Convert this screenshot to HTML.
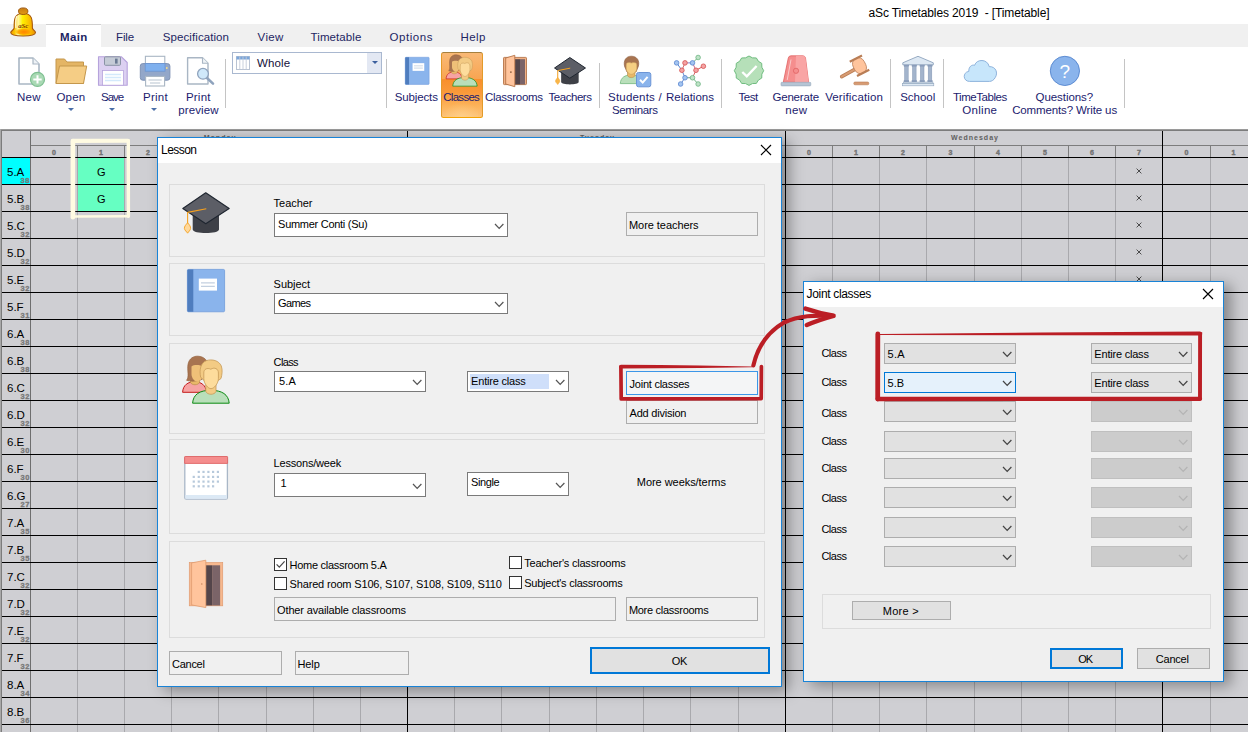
<!DOCTYPE html>
<html><head><meta charset="utf-8"><title>aSc Timetables 2019 - [Timetable]</title>
<style>
html,body{margin:0;padding:0}
body{width:1248px;height:732px;overflow:hidden;position:relative;background:#fff;font-family:"Liberation Sans",sans-serif;}
div{box-sizing:border-box}
.abs{position:absolute}
.sep{position:absolute;width:1px;background:#c4c4c4}
.gb{position:absolute;border:1px solid #dcdcdc}
.cmb{position:absolute;border:1px solid #7a7a7a;background:#fff}
.btn{position:absolute;border:1px solid #adadad;background:#f0f0f0}
.dcmb{position:absolute;border:1px solid #adadad;background:#e1e1e1}
.xcmb{position:absolute;border:1px solid #bfbfbf;background:#cccccc}
.hl{position:absolute;height:1px;background:#000;left:1px}
svg{position:absolute;overflow:visible}

</style></head><body>
<div style="position:absolute;top:6px;font-size:12px;line-height:14px;height:14px;color:#000;white-space:pre;letter-spacing:-0.118px;left:828.94px;width:260px;text-align:center;">aSc Timetables 2019  - [Timetable]</div>
<div style="position:absolute;left:0px;top:24px;width:1248px;height:23px;background:#f0f0f0"></div>
<div style="position:absolute;left:46px;top:24px;width:55px;height:23px;background:#fff;border-top:1px solid #d0d0d0"></div>
<div style="position:absolute;top:31px;font-size:11.5px;line-height:12px;height:12px;color:#1d2563;white-space:pre;letter-spacing:0.401px;font-weight:bold;left:-56.15px;width:260px;text-align:center;">Main</div>
<div style="position:absolute;top:31px;font-size:11.5px;line-height:12px;height:12px;color:#1d2563;white-space:pre;letter-spacing:-0.127px;left:-4.94px;width:260px;text-align:center;">File</div>
<div style="position:absolute;top:31px;font-size:11.5px;line-height:12px;height:12px;color:#1d2563;white-space:pre;letter-spacing:0.075px;left:65.94px;width:260px;text-align:center;">Specification</div>
<div style="position:absolute;top:31px;font-size:11.5px;line-height:12px;height:12px;color:#1d2563;white-space:pre;letter-spacing:0.393px;left:140.70px;width:260px;text-align:center;">View</div>
<div style="position:absolute;top:31px;font-size:11.5px;line-height:12px;height:12px;color:#1d2563;white-space:pre;letter-spacing:0.104px;left:206.05px;width:260px;text-align:center;">Timetable</div>
<div style="position:absolute;top:31px;font-size:11.5px;line-height:12px;height:12px;color:#1d2563;white-space:pre;letter-spacing:0.545px;left:281.27px;width:260px;text-align:center;">Options</div>
<div style="position:absolute;top:31px;font-size:11.5px;line-height:12px;height:12px;color:#1d2563;white-space:pre;letter-spacing:0.416px;left:343.21px;width:260px;text-align:center;">Help</div>
<svg style="left:8px;top:6px" width="32" height="32" viewBox="8 6 32 32">
<defs>
<linearGradient id="bg1" x1="0" x2="1" y1="0" y2="0"><stop offset="0" stop-color="#f09a00"/><stop offset="0.16" stop-color="#fbc400"/><stop offset="0.3" stop-color="#fff7a8"/><stop offset="0.48" stop-color="#fff000"/><stop offset="0.75" stop-color="#fbc000"/><stop offset="1" stop-color="#ee9200"/></linearGradient>
<radialGradient id="bg2" cx="0.55" cy="0.55" r="0.6"><stop offset="0" stop-color="#ff8400"/><stop offset="0.6" stop-color="#ffa800"/><stop offset="1" stop-color="#ffd000" stop-opacity="0.2"/></radialGradient>
<linearGradient id="bg3" x1="0" x2="0" y1="0" y2="1"><stop offset="0" stop-color="#c77c12"/><stop offset="1" stop-color="#e39a14"/></linearGradient>
</defs>
<path d="M14.1 28.2C14.1 21 13.6 13.2 23.2 13.2C32.9 13.2 32.4 21 32.4 28.2C32.7 30 35.4 31 35.5 32.6C35.4 35 29.5 36 23.1 36C16.7 36 10.8 35 10.7 32.6C10.8 31 13.8 30 14.1 28.2Z" fill="url(#bg1)" stroke="#a5560a" stroke-width="1.05"/>
<ellipse cx="23.3" cy="31.6" rx="8.3" ry="3.5" fill="url(#bg2)"/>
<path d="M16.6 16.5C15.6 19 15.6 24 15.8 27.5" fill="none" stroke="#fff" stroke-opacity="0.75" stroke-width="1.3" stroke-linecap="round"/>
<ellipse cx="23.2" cy="11.2" rx="4.7" ry="3.3" fill="url(#bg3)" stroke="#96500a" stroke-width="0.9"/>
<text x="23.3" y="28.4" font-family="Liberation Serif, serif" font-size="6.8" font-weight="bold" font-style="italic" fill="#7e3206" text-anchor="middle">aSc</text>
</svg>
<div class="sep" style="left:225px;top:59px;height:49px"></div>
<div class="sep" style="left:386px;top:59px;height:49px"></div>
<div class="sep" style="left:599px;top:63px;height:45px"></div>
<div class="sep" style="left:721px;top:59px;height:49px"></div>
<div class="sep" style="left:890px;top:59px;height:49px"></div>
<div class="sep" style="left:943px;top:59px;height:49px"></div>
<div class="sep" style="left:1124px;top:59px;height:49px"></div>
<svg style="left:16px;top:54px" width="32" height="36" viewBox="16 54 32 36">
<path d="M19 58H33L39 64V84H19Z" fill="#fff" stroke="#a9b6c4" stroke-width="1.6" stroke-linejoin="round"/>
<path d="M33 58V64H39" fill="#eef2f6" stroke="#a9b6c4" stroke-width="1.2" stroke-linejoin="round"/>
<circle cx="37.5" cy="79.4" r="7" fill="#a9d9b4" stroke="#7dbf90" stroke-width="1.2"/>
<path d="M37.5 75.2V83.6M33.3 79.4H41.7" stroke="#fff" stroke-width="2"/>
</svg>
<div style="position:absolute;top:91px;font-size:11.5px;line-height:12px;height:12px;color:#1b1b6e;white-space:pre;letter-spacing:0.197px;left:-101.15px;width:260px;text-align:center;">New</div>
<svg style="left:54px;top:54px" width="36" height="36" viewBox="54 54 36 36">
<path d="M56 59H64.5L67 62H83.5V83.5H56Z" fill="#e4b565" stroke="#c4974c" stroke-width="1" stroke-linejoin="round"/>
<path d="M59.5 66H86.7L83.5 83.5H56Z" fill="#f5cd85" stroke="#c4974c" stroke-width="1" stroke-linejoin="round"/>
</svg>
<div style="position:absolute;top:91px;font-size:11.5px;line-height:12px;height:12px;color:#1b1b6e;white-space:pre;letter-spacing:0.206px;left:-59.07px;width:260px;text-align:center;">Open</div>
<svg style="left:67.6px;top:108.1px" width="6" height="3" viewBox="0 0 6 3"><path d="M0 0H6L3 3Z" fill="#4a6ea8"/></svg>
<svg style="left:96px;top:54px" width="36" height="36" viewBox="96 54 36 36">
<path d="M98.5 56.8H121.5L127.2 62.5V85.2H98.5Z" fill="#dcd0f1" stroke="#b6a3dc" stroke-width="1.1" stroke-linejoin="round"/>
<rect x="104.5" y="56.8" width="16" height="8.5" rx="1" fill="#c5cbd6" stroke="#8a93a5" stroke-width="1"/>
<rect x="115" y="58.6" width="2.6" height="5" fill="#6b7a93"/>
<rect x="102.5" y="70.5" width="21" height="14.7" fill="#fff" stroke="#b6a3dc" stroke-width="0.8"/>
<path d="M105 74.5H121M105 77.5H121M105 80.5H121" stroke="#d3e9fb" stroke-width="1.3"/>
</svg>
<div style="position:absolute;top:91px;font-size:11.5px;line-height:12px;height:12px;color:#1b1b6e;white-space:pre;letter-spacing:-1.021px;left:-17.89px;width:260px;text-align:center;">Save</div>
<svg style="left:109.4px;top:108.1px" width="6" height="3" viewBox="0 0 6 3"><path d="M0 0H6L3 3Z" fill="#4a6ea8"/></svg>
<svg style="left:138px;top:54px" width="36" height="36" viewBox="138 54 36 36">
<rect x="145.4" y="56.3" width="19.4" height="9" fill="#fff" stroke="#a9b6c4" stroke-width="1.1"/>
<rect x="140.3" y="63.6" width="29.6" height="16.6" rx="2.5" fill="#93a7c9" stroke="#7f93b5" stroke-width="1"/>
<rect x="145.2" y="63.6" width="19.8" height="7.6" fill="#7fb0ee" stroke="#6b95d1" stroke-width="0.8"/>
<circle cx="166.8" cy="68" r="0.9" fill="#f7e08a"/>
<rect x="145.6" y="76.4" width="19" height="9.6" fill="#fff" stroke="#a9b6c4" stroke-width="1.1"/>
<path d="M148.5 80H161.7M150 83H160.2" stroke="#b8c3cf" stroke-width="1.1"/>
</svg>
<div style="position:absolute;top:91px;font-size:11.5px;line-height:12px;height:12px;color:#1b1b6e;white-space:pre;letter-spacing:0.238px;left:25.47px;width:260px;text-align:center;">Print</div>
<svg style="left:151.4px;top:108.2px" width="6" height="3" viewBox="0 0 6 3"><path d="M0 0H6L3 3Z" fill="#4a6ea8"/></svg>
<svg style="left:184px;top:54px" width="36" height="36" viewBox="184 54 36 36">
<path d="M187.6 57.8H202.5L208 63.3V84H187.6Z" fill="#fff" stroke="#a9b6c4" stroke-width="1.4" stroke-linejoin="round"/>
<path d="M202.5 57.8V63.3H208" fill="#eef2f6" stroke="#a9b6c4" stroke-width="1.1" stroke-linejoin="round"/>
<path d="M207 78L213 83.6" stroke="#8fa3bd" stroke-width="2.6" stroke-linecap="round"/>
<circle cx="203" cy="73.8" r="5.4" fill="#cfe8fa" stroke="#8fa3bd" stroke-width="1.3"/>
</svg>
<div style="position:absolute;top:91px;font-size:11.5px;line-height:12px;height:12px;color:#1b1b6e;white-space:pre;letter-spacing:0.213px;left:68.31px;width:260px;text-align:center;">Print</div>
<div style="position:absolute;top:104px;font-size:11.5px;line-height:12px;height:12px;color:#1b1b6e;white-space:pre;letter-spacing:0.129px;left:68.51px;width:260px;text-align:center;">preview</div>
<div style="position:absolute;left:232px;top:52px;width:150px;height:22px;border:1px solid #a9b8d0;background:#fff"></div>
<div style="position:absolute;left:367px;top:53px;width:14px;height:20px;background:#e3e8f3"></div>
<svg style="left:372px;top:61px" width="6" height="3" viewBox="0 0 6 3"><path d="M0 0H6L3 3Z" fill="#3b5f9e"/></svg>
<svg style="left:236px;top:56px" width="14" height="14" viewBox="0 0 14 14">
<rect x="0.5" y="0.5" width="13" height="13" fill="#fff" stroke="#b9c3d3" stroke-width="1"/>
<rect x="0.5" y="0.5" width="13" height="3" fill="#7ba6da"/>
<path d="M3.8 0.5V13.5M7 0.5V13.5M10.2 0.5V13.5" stroke="#c3cbd8" stroke-width="0.9"/>
</svg>
<div style="position:absolute;top:57px;font-size:11.5px;line-height:12px;height:12px;color:#14103a;white-space:pre;letter-spacing:0.15px;left:257px;">Whole</div>
<svg style="left:405px;top:57px" width="24.40" height="27.73" viewBox="0 0 38 43.2">
<rect x="0.4" y="0.4" width="37.2" height="42.4" rx="1.2" fill="#8ab4ec" stroke="#6f9bdb" stroke-width="0.8"/>
<path d="M1.4 0.4H6.3V42.8H1.4Q0.4 42.8 0.4 41.8V1.4Q0.4 0.4 1.4 0.4Z" fill="#4f7dbe"/>
<rect x="11.8" y="9.6" width="18.2" height="12" fill="#fff"/>
<path d="M14 13.8H27.8M14 17.3H27.8" stroke="#c3d0e0" stroke-width="1.3"/>
</svg>
<div style="position:absolute;top:91px;font-size:11.5px;line-height:12px;height:12px;color:#1b1b6e;white-space:pre;letter-spacing:-0.137px;left:286.31px;width:260px;text-align:center;">Subjects</div>
<div style="position:absolute;left:441px;top:52px;width:42px;height:66px;border:1px solid;border-color:#a6803e #e39a2a #f5a400 #e39a2a;border-radius:2.5px;background:linear-gradient(180deg,#f9b976 0%,#f8a552 40%,#f8902c 41.5%,#fa9a3a 62%,#fcb45c 84%,#fdc47a 100%)"></div>
<div style="position:absolute;left:446px;top:96px;width:32px;height:21px;background:radial-gradient(ellipse 60% 70% at 50% 100%,rgba(255,214,150,.6),rgba(255,214,150,0))"></div>
<svg style="left:445.2px;top:54.4px" width="33.35" height="33.35" viewBox="181 355 50 50">
<path d="M182.6 392.3C183 385 188 381.8 194.5 381.8C201 381.8 206 385 206.4 392.3Z" fill="#f6a3a3" stroke="#c41a1a" stroke-width="1"/>
<path d="M190.5 376H199.5V382.5C198 385.5 192 385.5 190.5 382.5Z" fill="#e8b868" stroke="#b98c4a" stroke-width="0.7"/>
<path d="M186.6 380.3C189.5 377 187 370 188 364.5C189 358 194 356 198 356.2C203.5 356.5 208.5 360 208 367C207.6 372 205 378 201 379.8C196 381.5 190 381.5 186.6 380.3Z" fill="#a87450" stroke="#93603c" stroke-width="0.7"/>
<path d="M191.5 366.5C194 364.5 200 364.5 203.5 367V374C203 379 199 381.5 197 381.5C194.5 381.5 191.5 378 191.5 374Z" fill="#efc078"/>
<path d="M192.6 403.2C193.2 394.5 199.5 390.3 210.8 390.3C222 390.3 228.5 394.5 229.2 403.2Z" fill="#b9dfba" stroke="#0c8a12" stroke-width="1"/>
<path d="M205.8 385H216V391.5C214.5 395.2 207.5 395.2 205.8 391.5Z" fill="#f3cb84" stroke="#c69a58" stroke-width="0.8"/>
<path d="M200.6 377C199.2 370 200.5 362.8 206.5 360.6C212 358.8 219 360.5 221.3 366C222.8 370 222 375 221 378.5L217.5 381H204.5Z" fill="#f3cb84" stroke="#c69a58" stroke-width="0.8"/>
<path d="M203.8 373C203.8 369 207 367.6 210.8 369.2C214.5 367 218.4 368.5 218.4 373V378.5C218.4 383.5 214 388.7 211 388.7C208 388.7 203.8 383.5 203.8 378.5Z" fill="#fddc9c" stroke="#c69a58" stroke-width="0.8"/>
</svg>
<div style="position:absolute;top:91px;font-size:11.5px;line-height:12px;height:12px;color:#1b1b6e;white-space:pre;letter-spacing:-0.725px;left:331.21px;width:260px;text-align:center;">Classes</div>
<svg style="left:500px;top:52px" width="30" height="38" viewBox="500 52 30 38">
<rect x="503.5" y="57.4" width="23" height="27.2" rx="0.8" fill="#f0b186" stroke="#b5754a" stroke-width="0.9"/>
<rect x="515" y="59.2" width="5" height="25.2" fill="#54454a"/>
<rect x="520" y="59.2" width="5" height="25.2" fill="#7b6468"/>
<path d="M505.7 58L514.8 55.3V86.7L505.7 84Z" fill="#ffc49c" stroke="#b5754a" stroke-width="0.9" stroke-linejoin="round"/>
<circle cx="510.9" cy="72.1" r="0.85" fill="#8a5a3a"/>
</svg>
<div style="position:absolute;top:91px;font-size:11.5px;line-height:12px;height:12px;color:#1b1b6e;white-space:pre;letter-spacing:-0.29px;left:383.86px;width:260px;text-align:center;">Classrooms</div>
<svg style="left:554.0px;top:57.0px" width="32.02" height="28.01" viewBox="182 192 48 42">
<path d="M192.7 214V229.5C192.7 234.3 219 234.3 219 229.5V214Z" fill="#3e4047"/>
<path d="M205.75 192.8L229.2 208.5L205.75 223.8L182.8 208.5Z" fill="#5c5e66" stroke="#1f2630" stroke-width="1.5" stroke-linejoin="round"/>
<path d="M206.3 208.7L187.6 212.4V224" fill="none" stroke="#f4a020" stroke-width="1.5" stroke-linejoin="round"/>
<path d="M187.6 222.8C189.4 224.8 190.8 226.5 190.6 228.5C190.4 230.3 188.6 231.6 187.6 233.2C186.6 231.6 184.6 230.3 184.4 228.5C184.2 226.5 185.8 224.8 187.6 222.8Z" fill="#f9b648" stroke="#f4a020" stroke-width="0.9"/>
</svg>
<div style="position:absolute;top:91px;font-size:11.5px;line-height:12px;height:12px;color:#1b1b6e;white-space:pre;letter-spacing:-0.466px;left:440.02px;width:260px;text-align:center;">Teachers</div>
<svg style="left:618px;top:54px" width="36" height="36" viewBox="618 54 36 36">
<path d="M620.3 83.6C620.6 77.5 625 75 631 75C637 75 641.5 77.5 641.8 83.6Z" fill="#b9dfba" stroke="#7cbc86" stroke-width="0.9"/>
<path d="M627.5 70H635V75.5C633.8 78.3 628.7 78.3 627.5 75.5Z" fill="#e8b868" stroke="#b98c4a" stroke-width="0.6"/>
<path d="M624.6 66.5C623.2 60.5 626 56.2 631.4 56.2C636.8 56.2 640 60.5 638.3 66.5L636 72H627Z" fill="#a87450" stroke="#8c5b3a" stroke-width="0.6"/>
<path d="M626.2 65C626.2 62.5 628.5 62 631.4 63C634.3 62 636.8 62.5 636.8 65V68.3C636.8 71.8 633.6 74.3 631.4 74.3C629.2 74.3 626.2 71.8 626.2 68.3Z" fill="#f6cf82" stroke="#c69a58" stroke-width="0.5"/>
<rect x="636.5" y="72.5" width="14.3" height="14.3" rx="2" fill="#8ab4ec" stroke="#6b95d6" stroke-width="1"/>
<path d="M640 79.8L642.7 82.6L647.6 76.8" fill="none" stroke="#fff" stroke-width="2"/>
</svg>
<div style="position:absolute;top:91px;font-size:11.5px;line-height:12px;height:12px;color:#1b1b6e;white-space:pre;letter-spacing:0.207px;left:504.98px;width:260px;text-align:center;">Students /</div>
<div style="position:absolute;top:104px;font-size:11.5px;line-height:12px;height:12px;color:#1b1b6e;white-space:pre;letter-spacing:-0.382px;left:504.81px;width:260px;text-align:center;">Seminars</div>
<svg style="left:672px;top:52px" width="40" height="40" viewBox="672 52 40 40"><path d="M685.00 62.88L692.50 62.88" stroke="#8a86c8" stroke-width="1"/><path d="M692.50 62.88L696.00 70.25" stroke="#c86a8a" stroke-width="1"/><path d="M696.00 70.25L692.50 77.75" stroke="#d06a6a" stroke-width="1"/><path d="M692.50 77.75L685.00 77.75" stroke="#6aa08a" stroke-width="1"/><path d="M685.00 77.75L681.88 70.25" stroke="#6a8ad0" stroke-width="1"/><path d="M681.88 70.25L685.00 62.88" stroke="#d06a6a" stroke-width="1"/><path d="M676.62 62.88L681.88 70.25" stroke="#5a86d0" stroke-width="1"/><path d="M698.12 57.50L692.50 62.88" stroke="#6cb482" stroke-width="1"/><path d="M703.38 66.25L696.00 70.25" stroke="#d65050" stroke-width="1"/><path d="M698.12 84.00L692.50 77.75" stroke="#6cb482" stroke-width="1"/><path d="M680.62 84.00L685.00 77.75" stroke="#5a86d0" stroke-width="1"/><circle cx="685.00" cy="62.88" r="2.3" fill="#f4a3a3" stroke="#d65050" stroke-width="0.8"/><circle cx="692.50" cy="62.88" r="2.3" fill="#a3c4f0" stroke="#5a86d0" stroke-width="0.8"/><circle cx="696.00" cy="70.25" r="2.3" fill="#f4a3a3" stroke="#d65050" stroke-width="0.8"/><circle cx="692.50" cy="77.75" r="2.3" fill="#bfe3c7" stroke="#6cb482" stroke-width="0.8"/><circle cx="685.00" cy="77.75" r="2.3" fill="#a3c4f0" stroke="#5a86d0" stroke-width="0.8"/><circle cx="681.88" cy="70.25" r="2.3" fill="#f4a3a3" stroke="#d65050" stroke-width="0.8"/><circle cx="676.62" cy="62.88" r="2.3" fill="#a3c4f0" stroke="#5a86d0" stroke-width="0.8"/><circle cx="698.12" cy="57.50" r="2.3" fill="#bfe3c7" stroke="#6cb482" stroke-width="0.8"/><circle cx="703.38" cy="66.25" r="2.3" fill="#f4a3a3" stroke="#d65050" stroke-width="0.8"/><circle cx="698.12" cy="84.00" r="2.3" fill="#bfe3c7" stroke="#6cb482" stroke-width="0.8"/><circle cx="680.62" cy="84.00" r="2.3" fill="#a3c4f0" stroke="#5a86d0" stroke-width="0.8"/></svg>
<div style="position:absolute;top:91px;font-size:11.5px;line-height:12px;height:12px;color:#1b1b6e;white-space:pre;letter-spacing:-0.006px;left:560.00px;width:260px;text-align:center;">Relations</div>
<svg style="left:732px;top:54px" width="36" height="36" viewBox="732 54 36 36">
<path d="M749.00 56.00L752.44 57.85L756.35 57.97L758.40 61.30L761.73 63.35L761.85 67.26L763.70 70.70L761.85 74.14L761.73 78.05L758.40 80.10L756.35 83.43L752.44 83.55L749.00 85.40L745.56 83.55L741.65 83.43L739.60 80.10L736.27 78.05L736.15 74.14L734.30 70.70L736.15 67.26L736.27 63.35L739.60 61.30L741.65 57.97L745.56 57.85Z" fill="#b6e0b9" stroke="#70bd80" stroke-width="1" stroke-linejoin="round"/>
<path d="M742.3 72L746.8 76.3L756.6 66" fill="none" stroke="#fff" stroke-width="2.4"/>
</svg>
<div style="position:absolute;top:91px;font-size:11.5px;line-height:12px;height:12px;color:#1b1b6e;white-space:pre;letter-spacing:-0.48px;left:618.13px;width:260px;text-align:center;">Test</div>
<svg style="left:778px;top:52px" width="36" height="38" viewBox="778 52 36 38">
<path d="M783.3 82.3L788.3 58Q788.8 55.8 791 55.8H802.8Q805 55.8 805.5 58L808.6 82.3Z" fill="#f58e8e" stroke="#e06262" stroke-width="0.8"/>
<path d="M796 55.8H802.8Q805 55.8 805.5 58L808.6 82.3H795Z" fill="#f9a5a5"/>
<path d="M787.2 80L791 59.5" stroke="#fbd0d0" stroke-width="0.9"/>
<circle cx="796" cy="70.8" r="2.6" fill="#f58e8e" stroke="#e06262" stroke-width="0.8"/>
<rect x="781" y="82.3" width="29.8" height="3.6" rx="0.8" fill="#b5c4d4" stroke="#97a9bd" stroke-width="0.6"/>
</svg>
<div style="position:absolute;top:91px;font-size:11.5px;line-height:12px;height:12px;color:#1b1b6e;white-space:pre;letter-spacing:-0.193px;left:665.65px;width:260px;text-align:center;">Generate</div>
<div style="position:absolute;top:104px;font-size:11.5px;line-height:12px;height:12px;color:#1b1b6e;white-space:pre;letter-spacing:0.451px;left:666.38px;width:260px;text-align:center;">new</div>
<svg style="left:838px;top:52px" width="36" height="38" viewBox="838 52 36 38">
<path d="M855.3 69.2L841.7 76.6" stroke="#b97d55" stroke-width="3.6" stroke-linecap="round"/>
<path d="M855.3 69.2L841.7 76.6" stroke="#d79b72" stroke-width="2" stroke-linecap="round"/>
<g transform="rotate(-27 859.5 65.7)">
<rect x="853.4" y="57.6" width="12.2" height="16.2" rx="5.4" ry="6.5" fill="#ffc49c" stroke="#c08560" stroke-width="0.8"/>
<rect x="852.6" y="56.6" width="13.8" height="2.2" fill="#b97d55"/>
<rect x="852.6" y="72.6" width="13.8" height="2.2" fill="#b97d55"/>
</g>
<rect x="853.8" y="82" width="15" height="2.8" rx="1.2" fill="#d79b72" stroke="#b97d55" stroke-width="0.6"/>
</svg>
<div style="position:absolute;top:91px;font-size:11.5px;line-height:12px;height:12px;color:#1b1b6e;white-space:pre;letter-spacing:0.14px;left:724.12px;width:260px;text-align:center;">Verification</div>
<svg style="left:900px;top:54px" width="36" height="34" viewBox="900 54 36 34">
<path d="M918 56.3L933.3 62.8V64.8H902.8V62.8Z" fill="#dde8f3" stroke="#8fa4bd" stroke-width="0.9" stroke-linejoin="round"/>
<g fill="#a3b4cc" stroke="#8497b4" stroke-width="0.5">
<rect x="904.6" y="66.2" width="3.6" height="14.6"/><rect x="912.5" y="66.2" width="3.6" height="14.6"/><rect x="920.4" y="66.2" width="3.6" height="14.6"/><rect x="928.2" y="66.2" width="3.6" height="14.6"/>
</g>
<g fill="#8a9dbb"><rect x="903.8" y="64.8" width="5.2" height="1.6"/><rect x="911.7" y="64.8" width="5.2" height="1.6"/><rect x="919.6" y="64.8" width="5.2" height="1.6"/><rect x="927.4" y="64.8" width="5.2" height="1.6"/>
<rect x="903.8" y="80.2" width="5.2" height="1.8"/><rect x="911.7" y="80.2" width="5.2" height="1.8"/><rect x="919.6" y="80.2" width="5.2" height="1.8"/><rect x="927.4" y="80.2" width="5.2" height="1.8"/></g>
<rect x="903.4" y="82" width="29.6" height="1.6" fill="#cbd7e5" stroke="#8fa4bd" stroke-width="0.5"/>
<rect x="902.4" y="83.6" width="31.4" height="2.2" fill="#dde8f3" stroke="#8fa4bd" stroke-width="0.6"/>
</svg>
<div style="position:absolute;top:91px;font-size:11.5px;line-height:12px;height:12px;color:#1b1b6e;white-space:pre;letter-spacing:-0.023px;left:787.66px;width:260px;text-align:center;">School</div>
<svg style="left:960px;top:56px" width="40" height="30" viewBox="960 56 40 30">
<path d="M969.5 81.4C962.8 81.4 962.4 72.2 968.8 71.4C968.6 66.5 972 64.4 974.6 65.3C976.4 58.8 987.6 58.6 989.2 66.6C996 66.4 998.2 73 995.2 77.6C993.8 80.2 991.5 81.4 989.5 81.4Z" fill="#c7e6fb" stroke="#8fb3dc" stroke-width="1"/>
</svg>
<div style="position:absolute;top:91px;font-size:11.5px;line-height:12px;height:12px;color:#1b1b6e;white-space:pre;letter-spacing:-0.458px;left:849.85px;width:260px;text-align:center;">TimeTables</div>
<div style="position:absolute;top:104px;font-size:11.5px;line-height:12px;height:12px;color:#1b1b6e;white-space:pre;letter-spacing:0.271px;left:849.79px;width:260px;text-align:center;">Online</div>
<svg style="left:1048px;top:54px" width="34" height="34" viewBox="1048 54 34 34">
<circle cx="1064.9" cy="70.9" r="14.6" fill="#8ab4ec" stroke="#5d8cd2" stroke-width="1"/>
<text x="1064.9" y="77.6" font-family="Liberation Sans, sans-serif" font-size="19" fill="#fff" text-anchor="middle">?</text>
</svg>
<div style="position:absolute;top:91px;font-size:11.5px;line-height:12px;height:12px;color:#1b1b6e;white-space:pre;letter-spacing:-0.064px;left:934.32px;width:260px;text-align:center;">Questions?</div>
<div style="position:absolute;top:104px;font-size:11.5px;line-height:12px;height:12px;color:#1b1b6e;white-space:pre;letter-spacing:-0.127px;left:934.59px;width:260px;text-align:center;">Comments? Write us</div>
<div style="position:absolute;left:0px;top:129px;width:1248px;height:603px;background:#cfcfd3"></div>
<div style="position:absolute;left:0px;top:129px;width:1248px;height:1px;background:#9a9a9a"></div>
<div style="position:absolute;left:0px;top:130px;width:1248px;height:1px;background:#7c7c7c"></div>
<div style="position:absolute;left:0px;top:129px;width:1px;height:603px;background:#a8a8a8"></div>
<div style="position:absolute;left:1px;top:130px;width:1px;height:602px;background:#7c7c7c"></div>
<div style="position:absolute;left:30px;top:131px;width:1px;height:601px;background:#6e6e6e"></div>
<div style="position:absolute;left:31px;top:145px;width:1217px;height:1px;background:#7d7d7d"></div>
<div style="position:absolute;left:77px;top:146px;width:1px;height:11px;background:#7d7d7d"></div>
<div style="position:absolute;left:77px;top:158px;width:1px;height:574px;background:#a9a9ad"></div>
<div style="position:absolute;left:124px;top:146px;width:1px;height:11px;background:#7d7d7d"></div>
<div style="position:absolute;left:124px;top:158px;width:1px;height:574px;background:#a9a9ad"></div>
<div style="position:absolute;left:171px;top:146px;width:1px;height:11px;background:#7d7d7d"></div>
<div style="position:absolute;left:171px;top:158px;width:1px;height:574px;background:#a9a9ad"></div>
<div style="position:absolute;left:218px;top:146px;width:1px;height:11px;background:#7d7d7d"></div>
<div style="position:absolute;left:218px;top:158px;width:1px;height:574px;background:#a9a9ad"></div>
<div style="position:absolute;left:266px;top:146px;width:1px;height:11px;background:#7d7d7d"></div>
<div style="position:absolute;left:266px;top:158px;width:1px;height:574px;background:#a9a9ad"></div>
<div style="position:absolute;left:313px;top:146px;width:1px;height:11px;background:#7d7d7d"></div>
<div style="position:absolute;left:313px;top:158px;width:1px;height:574px;background:#a9a9ad"></div>
<div style="position:absolute;left:360px;top:146px;width:1px;height:11px;background:#7d7d7d"></div>
<div style="position:absolute;left:360px;top:158px;width:1px;height:574px;background:#a9a9ad"></div>
<div style="position:absolute;left:407px;top:131px;width:1px;height:601px;background:#000"></div>
<div style="position:absolute;top:149px;font-size:7px;line-height:7px;height:7px;color:#737373;white-space:pre;font-weight:bold;left:44.00px;width:20px;text-align:center;-webkit-text-stroke:0.4px #737373;">0</div>
<div style="position:absolute;top:149px;font-size:7px;line-height:7px;height:7px;color:#737373;white-space:pre;font-weight:bold;left:91.00px;width:20px;text-align:center;-webkit-text-stroke:0.4px #737373;">1</div>
<div style="position:absolute;top:149px;font-size:7px;line-height:7px;height:7px;color:#737373;white-space:pre;font-weight:bold;left:138.00px;width:20px;text-align:center;-webkit-text-stroke:0.4px #737373;">2</div>
<div style="position:absolute;top:149px;font-size:7px;line-height:7px;height:7px;color:#737373;white-space:pre;font-weight:bold;left:185.00px;width:20px;text-align:center;-webkit-text-stroke:0.4px #737373;">3</div>
<div style="position:absolute;top:149px;font-size:7px;line-height:7px;height:7px;color:#737373;white-space:pre;font-weight:bold;left:232.50px;width:20px;text-align:center;-webkit-text-stroke:0.4px #737373;">4</div>
<div style="position:absolute;top:149px;font-size:7px;line-height:7px;height:7px;color:#737373;white-space:pre;font-weight:bold;left:280.00px;width:20px;text-align:center;-webkit-text-stroke:0.4px #737373;">5</div>
<div style="position:absolute;top:149px;font-size:7px;line-height:7px;height:7px;color:#737373;white-space:pre;font-weight:bold;left:327.00px;width:20px;text-align:center;-webkit-text-stroke:0.4px #737373;">6</div>
<div style="position:absolute;top:149px;font-size:7px;line-height:7px;height:7px;color:#737373;white-space:pre;font-weight:bold;left:374.00px;width:20px;text-align:center;-webkit-text-stroke:0.4px #737373;">7</div>
<div style="position:absolute;top:134px;font-size:7px;line-height:7px;height:7px;color:#606060;white-space:pre;letter-spacing:1.028px;font-weight:bold;left:160.01px;width:120px;text-align:center;">Monday</div>
<div style="position:absolute;left:454px;top:146px;width:1px;height:11px;background:#7d7d7d"></div>
<div style="position:absolute;left:454px;top:158px;width:1px;height:574px;background:#a9a9ad"></div>
<div style="position:absolute;left:501px;top:146px;width:1px;height:11px;background:#7d7d7d"></div>
<div style="position:absolute;left:501px;top:158px;width:1px;height:574px;background:#a9a9ad"></div>
<div style="position:absolute;left:549px;top:146px;width:1px;height:11px;background:#7d7d7d"></div>
<div style="position:absolute;left:549px;top:158px;width:1px;height:574px;background:#a9a9ad"></div>
<div style="position:absolute;left:596px;top:146px;width:1px;height:11px;background:#7d7d7d"></div>
<div style="position:absolute;left:596px;top:158px;width:1px;height:574px;background:#a9a9ad"></div>
<div style="position:absolute;left:643px;top:146px;width:1px;height:11px;background:#7d7d7d"></div>
<div style="position:absolute;left:643px;top:158px;width:1px;height:574px;background:#a9a9ad"></div>
<div style="position:absolute;left:690px;top:146px;width:1px;height:11px;background:#7d7d7d"></div>
<div style="position:absolute;left:690px;top:158px;width:1px;height:574px;background:#a9a9ad"></div>
<div style="position:absolute;left:738px;top:146px;width:1px;height:11px;background:#7d7d7d"></div>
<div style="position:absolute;left:738px;top:158px;width:1px;height:574px;background:#a9a9ad"></div>
<div style="position:absolute;left:785px;top:131px;width:1px;height:601px;background:#000"></div>
<div style="position:absolute;top:149px;font-size:7px;line-height:7px;height:7px;color:#737373;white-space:pre;font-weight:bold;left:421.00px;width:20px;text-align:center;-webkit-text-stroke:0.4px #737373;">0</div>
<div style="position:absolute;top:149px;font-size:7px;line-height:7px;height:7px;color:#737373;white-space:pre;font-weight:bold;left:468.00px;width:20px;text-align:center;-webkit-text-stroke:0.4px #737373;">1</div>
<div style="position:absolute;top:149px;font-size:7px;line-height:7px;height:7px;color:#737373;white-space:pre;font-weight:bold;left:515.50px;width:20px;text-align:center;-webkit-text-stroke:0.4px #737373;">2</div>
<div style="position:absolute;top:149px;font-size:7px;line-height:7px;height:7px;color:#737373;white-space:pre;font-weight:bold;left:563.00px;width:20px;text-align:center;-webkit-text-stroke:0.4px #737373;">3</div>
<div style="position:absolute;top:149px;font-size:7px;line-height:7px;height:7px;color:#737373;white-space:pre;font-weight:bold;left:610.00px;width:20px;text-align:center;-webkit-text-stroke:0.4px #737373;">4</div>
<div style="position:absolute;top:149px;font-size:7px;line-height:7px;height:7px;color:#737373;white-space:pre;font-weight:bold;left:657.00px;width:20px;text-align:center;-webkit-text-stroke:0.4px #737373;">5</div>
<div style="position:absolute;top:149px;font-size:7px;line-height:7px;height:7px;color:#737373;white-space:pre;font-weight:bold;left:704.50px;width:20px;text-align:center;-webkit-text-stroke:0.4px #737373;">6</div>
<div style="position:absolute;top:149px;font-size:7px;line-height:7px;height:7px;color:#737373;white-space:pre;font-weight:bold;left:752.00px;width:20px;text-align:center;-webkit-text-stroke:0.4px #737373;">7</div>
<div style="position:absolute;top:134px;font-size:7px;line-height:7px;height:7px;color:#606060;white-space:pre;letter-spacing:1.028px;font-weight:bold;left:537.51px;width:120px;text-align:center;">Tuesday</div>
<div style="position:absolute;left:832px;top:146px;width:1px;height:11px;background:#7d7d7d"></div>
<div style="position:absolute;left:832px;top:158px;width:1px;height:574px;background:#a9a9ad"></div>
<div style="position:absolute;left:879px;top:146px;width:1px;height:11px;background:#7d7d7d"></div>
<div style="position:absolute;left:879px;top:158px;width:1px;height:574px;background:#a9a9ad"></div>
<div style="position:absolute;left:926px;top:146px;width:1px;height:11px;background:#7d7d7d"></div>
<div style="position:absolute;left:926px;top:158px;width:1px;height:574px;background:#a9a9ad"></div>
<div style="position:absolute;left:974px;top:146px;width:1px;height:11px;background:#7d7d7d"></div>
<div style="position:absolute;left:974px;top:158px;width:1px;height:574px;background:#a9a9ad"></div>
<div style="position:absolute;left:1021px;top:146px;width:1px;height:11px;background:#7d7d7d"></div>
<div style="position:absolute;left:1021px;top:158px;width:1px;height:574px;background:#a9a9ad"></div>
<div style="position:absolute;left:1068px;top:146px;width:1px;height:11px;background:#7d7d7d"></div>
<div style="position:absolute;left:1068px;top:158px;width:1px;height:574px;background:#a9a9ad"></div>
<div style="position:absolute;left:1115px;top:146px;width:1px;height:11px;background:#7d7d7d"></div>
<div style="position:absolute;left:1115px;top:158px;width:1px;height:574px;background:#a9a9ad"></div>
<div style="position:absolute;left:1162px;top:131px;width:1px;height:601px;background:#000"></div>
<div style="position:absolute;top:149px;font-size:7px;line-height:7px;height:7px;color:#737373;white-space:pre;font-weight:bold;left:799.00px;width:20px;text-align:center;-webkit-text-stroke:0.4px #737373;">0</div>
<div style="position:absolute;top:149px;font-size:7px;line-height:7px;height:7px;color:#737373;white-space:pre;font-weight:bold;left:846.00px;width:20px;text-align:center;-webkit-text-stroke:0.4px #737373;">1</div>
<div style="position:absolute;top:149px;font-size:7px;line-height:7px;height:7px;color:#737373;white-space:pre;font-weight:bold;left:893.00px;width:20px;text-align:center;-webkit-text-stroke:0.4px #737373;">2</div>
<div style="position:absolute;top:149px;font-size:7px;line-height:7px;height:7px;color:#737373;white-space:pre;font-weight:bold;left:940.50px;width:20px;text-align:center;-webkit-text-stroke:0.4px #737373;">3</div>
<div style="position:absolute;top:149px;font-size:7px;line-height:7px;height:7px;color:#737373;white-space:pre;font-weight:bold;left:988.00px;width:20px;text-align:center;-webkit-text-stroke:0.4px #737373;">4</div>
<div style="position:absolute;top:149px;font-size:7px;line-height:7px;height:7px;color:#737373;white-space:pre;font-weight:bold;left:1035.00px;width:20px;text-align:center;-webkit-text-stroke:0.4px #737373;">5</div>
<div style="position:absolute;top:149px;font-size:7px;line-height:7px;height:7px;color:#737373;white-space:pre;font-weight:bold;left:1082.00px;width:20px;text-align:center;-webkit-text-stroke:0.4px #737373;">6</div>
<div style="position:absolute;top:149px;font-size:7px;line-height:7px;height:7px;color:#737373;white-space:pre;font-weight:bold;left:1129.00px;width:20px;text-align:center;-webkit-text-stroke:0.4px #737373;">7</div>
<div style="position:absolute;top:134px;font-size:7px;line-height:7px;height:7px;color:#606060;white-space:pre;letter-spacing:1.028px;font-weight:bold;left:915.01px;width:120px;text-align:center;">Wednesday</div>
<div style="position:absolute;left:1210px;top:146px;width:1px;height:11px;background:#7d7d7d"></div>
<div style="position:absolute;left:1210px;top:158px;width:1px;height:574px;background:#a9a9ad"></div>
<div style="position:absolute;top:149px;font-size:7px;line-height:7px;height:7px;color:#737373;white-space:pre;font-weight:bold;left:1176.50px;width:20px;text-align:center;-webkit-text-stroke:0.4px #737373;">0</div>
<div style="position:absolute;top:149px;font-size:7px;line-height:7px;height:7px;color:#737373;white-space:pre;font-weight:bold;left:1223.50px;width:20px;text-align:center;-webkit-text-stroke:0.4px #737373;">1</div>
<div style="position:absolute;left:2px;top:157px;width:1246px;height:1px;background:#000"></div>
<div style="position:absolute;left:2px;top:184px;width:1246px;height:1px;background:#000"></div>
<div style="position:absolute;left:2px;top:211px;width:1246px;height:1px;background:#000"></div>
<div style="position:absolute;left:2px;top:238px;width:1246px;height:1px;background:#000"></div>
<div style="position:absolute;left:2px;top:265px;width:1246px;height:1px;background:#000"></div>
<div style="position:absolute;left:2px;top:292px;width:1246px;height:1px;background:#000"></div>
<div style="position:absolute;left:2px;top:319px;width:1246px;height:1px;background:#000"></div>
<div style="position:absolute;left:2px;top:346px;width:1246px;height:1px;background:#000"></div>
<div style="position:absolute;left:2px;top:373px;width:1246px;height:1px;background:#000"></div>
<div style="position:absolute;left:2px;top:400px;width:1246px;height:1px;background:#000"></div>
<div style="position:absolute;left:2px;top:427px;width:1246px;height:1px;background:#000"></div>
<div style="position:absolute;left:2px;top:454px;width:1246px;height:1px;background:#000"></div>
<div style="position:absolute;left:2px;top:481px;width:1246px;height:1px;background:#000"></div>
<div style="position:absolute;left:2px;top:508px;width:1246px;height:1px;background:#000"></div>
<div style="position:absolute;left:2px;top:535px;width:1246px;height:1px;background:#000"></div>
<div style="position:absolute;left:2px;top:562px;width:1246px;height:1px;background:#000"></div>
<div style="position:absolute;left:2px;top:589px;width:1246px;height:1px;background:#000"></div>
<div style="position:absolute;left:2px;top:616px;width:1246px;height:1px;background:#000"></div>
<div style="position:absolute;left:2px;top:643px;width:1246px;height:1px;background:#000"></div>
<div style="position:absolute;left:2px;top:670px;width:1246px;height:1px;background:#000"></div>
<div style="position:absolute;left:2px;top:697px;width:1246px;height:1px;background:#000"></div>
<div style="position:absolute;left:2px;top:724px;width:1246px;height:1px;background:#000"></div>
<div style="position:absolute;left:2px;top:158px;width:28px;height:26px;background:#00ffff"></div>
<div style="position:absolute;top:166px;font-size:11.5px;line-height:12px;height:12px;color:#000;white-space:pre;left:7px;">5.A</div>
<div style="position:absolute;top:176px;font-size:7.5px;line-height:9px;height:9px;color:#787878;white-space:pre;letter-spacing:0.6px;font-weight:bold;left:10.10px;width:20px;text-align:right;-webkit-text-stroke:0.3px #787878;">38</div>
<div style="position:absolute;top:193px;font-size:11.5px;line-height:12px;height:12px;color:#000;white-space:pre;left:7px;">5.B</div>
<div style="position:absolute;top:203px;font-size:7.5px;line-height:9px;height:9px;color:#787878;white-space:pre;letter-spacing:0.6px;font-weight:bold;left:10.10px;width:20px;text-align:right;-webkit-text-stroke:0.3px #787878;">38</div>
<div style="position:absolute;top:220px;font-size:11.5px;line-height:12px;height:12px;color:#000;white-space:pre;left:7px;">5.C</div>
<div style="position:absolute;top:230px;font-size:7.5px;line-height:9px;height:9px;color:#787878;white-space:pre;letter-spacing:0.6px;font-weight:bold;left:10.10px;width:20px;text-align:right;-webkit-text-stroke:0.3px #787878;">32</div>
<div style="position:absolute;top:247px;font-size:11.5px;line-height:12px;height:12px;color:#000;white-space:pre;left:7px;">5.D</div>
<div style="position:absolute;top:257px;font-size:7.5px;line-height:9px;height:9px;color:#787878;white-space:pre;letter-spacing:0.6px;font-weight:bold;left:10.10px;width:20px;text-align:right;-webkit-text-stroke:0.3px #787878;">32</div>
<div style="position:absolute;top:274px;font-size:11.5px;line-height:12px;height:12px;color:#000;white-space:pre;left:7px;">5.E</div>
<div style="position:absolute;top:284px;font-size:7.5px;line-height:9px;height:9px;color:#787878;white-space:pre;letter-spacing:0.6px;font-weight:bold;left:10.10px;width:20px;text-align:right;-webkit-text-stroke:0.3px #787878;">32</div>
<div style="position:absolute;top:301px;font-size:11.5px;line-height:12px;height:12px;color:#000;white-space:pre;left:7px;">5.F</div>
<div style="position:absolute;top:311px;font-size:7.5px;line-height:9px;height:9px;color:#787878;white-space:pre;letter-spacing:0.6px;font-weight:bold;left:10.10px;width:20px;text-align:right;-webkit-text-stroke:0.3px #787878;">31</div>
<div style="position:absolute;top:328px;font-size:11.5px;line-height:12px;height:12px;color:#000;white-space:pre;left:7px;">6.A</div>
<div style="position:absolute;top:338px;font-size:7.5px;line-height:9px;height:9px;color:#787878;white-space:pre;letter-spacing:0.6px;font-weight:bold;left:10.10px;width:20px;text-align:right;-webkit-text-stroke:0.3px #787878;">38</div>
<div style="position:absolute;top:355px;font-size:11.5px;line-height:12px;height:12px;color:#000;white-space:pre;left:7px;">6.B</div>
<div style="position:absolute;top:365px;font-size:7.5px;line-height:9px;height:9px;color:#787878;white-space:pre;letter-spacing:0.6px;font-weight:bold;left:10.10px;width:20px;text-align:right;-webkit-text-stroke:0.3px #787878;">38</div>
<div style="position:absolute;top:382px;font-size:11.5px;line-height:12px;height:12px;color:#000;white-space:pre;left:7px;">6.C</div>
<div style="position:absolute;top:392px;font-size:7.5px;line-height:9px;height:9px;color:#787878;white-space:pre;letter-spacing:0.6px;font-weight:bold;left:10.10px;width:20px;text-align:right;-webkit-text-stroke:0.3px #787878;">32</div>
<div style="position:absolute;top:409px;font-size:11.5px;line-height:12px;height:12px;color:#000;white-space:pre;left:7px;">6.D</div>
<div style="position:absolute;top:419px;font-size:7.5px;line-height:9px;height:9px;color:#787878;white-space:pre;letter-spacing:0.6px;font-weight:bold;left:10.10px;width:20px;text-align:right;-webkit-text-stroke:0.3px #787878;">32</div>
<div style="position:absolute;top:436px;font-size:11.5px;line-height:12px;height:12px;color:#000;white-space:pre;left:7px;">6.E</div>
<div style="position:absolute;top:446px;font-size:7.5px;line-height:9px;height:9px;color:#787878;white-space:pre;letter-spacing:0.6px;font-weight:bold;left:10.10px;width:20px;text-align:right;-webkit-text-stroke:0.3px #787878;">30</div>
<div style="position:absolute;top:463px;font-size:11.5px;line-height:12px;height:12px;color:#000;white-space:pre;left:7px;">6.F</div>
<div style="position:absolute;top:473px;font-size:7.5px;line-height:9px;height:9px;color:#787878;white-space:pre;letter-spacing:0.6px;font-weight:bold;left:10.10px;width:20px;text-align:right;-webkit-text-stroke:0.3px #787878;">30</div>
<div style="position:absolute;top:490px;font-size:11.5px;line-height:12px;height:12px;color:#000;white-space:pre;left:7px;">6.G</div>
<div style="position:absolute;top:500px;font-size:7.5px;line-height:9px;height:9px;color:#787878;white-space:pre;letter-spacing:0.6px;font-weight:bold;left:10.10px;width:20px;text-align:right;-webkit-text-stroke:0.3px #787878;">27</div>
<div style="position:absolute;top:517px;font-size:11.5px;line-height:12px;height:12px;color:#000;white-space:pre;left:7px;">7.A</div>
<div style="position:absolute;top:527px;font-size:7.5px;line-height:9px;height:9px;color:#787878;white-space:pre;letter-spacing:0.6px;font-weight:bold;left:10.10px;width:20px;text-align:right;-webkit-text-stroke:0.3px #787878;">35</div>
<div style="position:absolute;top:544px;font-size:11.5px;line-height:12px;height:12px;color:#000;white-space:pre;left:7px;">7.B</div>
<div style="position:absolute;top:554px;font-size:7.5px;line-height:9px;height:9px;color:#787878;white-space:pre;letter-spacing:0.6px;font-weight:bold;left:10.10px;width:20px;text-align:right;-webkit-text-stroke:0.3px #787878;">35</div>
<div style="position:absolute;top:571px;font-size:11.5px;line-height:12px;height:12px;color:#000;white-space:pre;left:7px;">7.C</div>
<div style="position:absolute;top:581px;font-size:7.5px;line-height:9px;height:9px;color:#787878;white-space:pre;letter-spacing:0.6px;font-weight:bold;left:10.10px;width:20px;text-align:right;-webkit-text-stroke:0.3px #787878;">32</div>
<div style="position:absolute;top:598px;font-size:11.5px;line-height:12px;height:12px;color:#000;white-space:pre;left:7px;">7.D</div>
<div style="position:absolute;top:608px;font-size:7.5px;line-height:9px;height:9px;color:#787878;white-space:pre;letter-spacing:0.6px;font-weight:bold;left:10.10px;width:20px;text-align:right;-webkit-text-stroke:0.3px #787878;">32</div>
<div style="position:absolute;top:625px;font-size:11.5px;line-height:12px;height:12px;color:#000;white-space:pre;left:7px;">7.E</div>
<div style="position:absolute;top:635px;font-size:7.5px;line-height:9px;height:9px;color:#787878;white-space:pre;letter-spacing:0.6px;font-weight:bold;left:10.10px;width:20px;text-align:right;-webkit-text-stroke:0.3px #787878;">32</div>
<div style="position:absolute;top:652px;font-size:11.5px;line-height:12px;height:12px;color:#000;white-space:pre;left:7px;">7.F</div>
<div style="position:absolute;top:662px;font-size:7.5px;line-height:9px;height:9px;color:#787878;white-space:pre;letter-spacing:0.6px;font-weight:bold;left:10.10px;width:20px;text-align:right;-webkit-text-stroke:0.3px #787878;">32</div>
<div style="position:absolute;top:679px;font-size:11.5px;line-height:12px;height:12px;color:#000;white-space:pre;left:7px;">8.A</div>
<div style="position:absolute;top:689px;font-size:7.5px;line-height:9px;height:9px;color:#787878;white-space:pre;letter-spacing:0.6px;font-weight:bold;left:10.10px;width:20px;text-align:right;-webkit-text-stroke:0.3px #787878;">34</div>
<div style="position:absolute;top:706px;font-size:11.5px;line-height:12px;height:12px;color:#000;white-space:pre;left:7px;">8.B</div>
<div style="position:absolute;top:716px;font-size:7.5px;line-height:9px;height:9px;color:#787878;white-space:pre;letter-spacing:0.6px;font-weight:bold;left:10.10px;width:20px;text-align:right;-webkit-text-stroke:0.3px #787878;">36</div>
<div style="position:absolute;top:733px;font-size:11.5px;line-height:12px;height:12px;color:#000;white-space:pre;left:7px;">8.C</div>
<div style="position:absolute;top:743px;font-size:7.5px;line-height:9px;height:9px;color:#787878;white-space:pre;letter-spacing:0.6px;font-weight:bold;left:10.10px;width:20px;text-align:right;-webkit-text-stroke:0.3px #787878;">33</div>
<div style="position:absolute;left:78px;top:158px;width:46px;height:26px;background:#66ffc2"></div>
<div style="position:absolute;left:78px;top:185px;width:46px;height:26px;background:#66ffc2"></div>
<div style="position:absolute;top:166px;font-size:11px;line-height:12px;height:12px;color:#000;white-space:pre;left:86.20px;width:30px;text-align:center;">G</div>
<div style="position:absolute;top:193px;font-size:11px;line-height:12px;height:12px;color:#000;white-space:pre;left:86.20px;width:30px;text-align:center;">G</div>
<svg style="left:1135.5px;top:168px" width="6" height="6" viewBox="0 0 6 6"><path d="M0.6 0.6L5.4 5.4M5.4 0.6L0.6 5.4" stroke="#333" stroke-width="0.85"/></svg>
<svg style="left:1135.5px;top:195px" width="6" height="6" viewBox="0 0 6 6"><path d="M0.6 0.6L5.4 5.4M5.4 0.6L0.6 5.4" stroke="#333" stroke-width="0.85"/></svg>
<svg style="left:1135.5px;top:222px" width="6" height="6" viewBox="0 0 6 6"><path d="M0.6 0.6L5.4 5.4M5.4 0.6L0.6 5.4" stroke="#333" stroke-width="0.85"/></svg>
<svg style="left:1135.5px;top:249px" width="6" height="6" viewBox="0 0 6 6"><path d="M0.6 0.6L5.4 5.4M5.4 0.6L0.6 5.4" stroke="#333" stroke-width="0.85"/></svg>
<svg style="left:1135.5px;top:276px" width="6" height="6" viewBox="0 0 6 6"><path d="M0.6 0.6L5.4 5.4M5.4 0.6L0.6 5.4" stroke="#333" stroke-width="0.85"/></svg>
<svg style="left:66px;top:134px" width="70" height="90" viewBox="66 134 70 90">
<path d="M72.9 217.2L72.9 141" fill="none" stroke="#fffbe2" stroke-width="4.6" stroke-linecap="round"/>
<path d="M72.9 140.9L128 140.7" fill="none" stroke="#fffbe2" stroke-width="4.1" stroke-linecap="round"/>
<path d="M128.3 140.8L128.4 216.3" fill="none" stroke="#fffbe2" stroke-width="3.4" stroke-linecap="round"/>
<path d="M74 216.5L128.4 216.3" fill="none" stroke="#fffbe2" stroke-width="2.4" stroke-linecap="round"/>
</svg>
<div style="position:absolute;left:157px;top:137px;width:625px;height:550px;background:#f0f0f0;border:1px solid #1883d7;box-shadow:7px 4px 14px 0 rgba(0,0,0,.36)"></div>
<div style="position:absolute;left:158px;top:138px;width:623px;height:25px;background:#fff"></div>
<div style="position:absolute;top:143px;font-size:12px;line-height:14px;height:14px;color:#000;white-space:pre;letter-spacing:-0.559px;left:161.1px;">Lesson</div>
<svg style="left:759.7px;top:144px" width="12" height="12" viewBox="-6 -6 12 12"><path d="M-5 -5L5 5M5 -5L-5 5" stroke="#000" stroke-width="1.15"/></svg>
<div class="gb" style="left:169px;top:184px;width:596px;height:73px"></div>
<div class="gb" style="left:169px;top:263px;width:596px;height:73px"></div>
<div class="gb" style="left:169px;top:343px;width:596px;height:91px"></div>
<div class="gb" style="left:169px;top:439px;width:596px;height:95px"></div>
<div class="gb" style="left:169px;top:541px;width:596px;height:97px"></div>
<svg style="left:182px;top:192px" width="48.00" height="42.00" viewBox="182 192 48 42">
<path d="M192.7 214V229.5C192.7 234.3 219 234.3 219 229.5V214Z" fill="#3e4047"/>
<path d="M205.75 192.8L229.2 208.5L205.75 223.8L182.8 208.5Z" fill="#5c5e66" stroke="#1f2630" stroke-width="1.1" stroke-linejoin="round"/>
<path d="M206.3 208.7L187.6 212.4V224" fill="none" stroke="#f4a020" stroke-width="1.1" stroke-linejoin="round"/>
<path d="M187.6 222.8C189.4 224.8 190.8 226.5 190.6 228.5C190.4 230.3 188.6 231.6 187.6 233.2C186.6 231.6 184.6 230.3 184.4 228.5C184.2 226.5 185.8 224.8 187.6 222.8Z" fill="#ffd89a" stroke="#f4a020" stroke-width="0.9"/>
</svg>
<div style="position:absolute;top:197px;font-size:11px;line-height:12px;height:12px;color:#000;white-space:pre;letter-spacing:-0.039px;left:273.6px;">Teacher</div>
<div class="cmb" style="left:274px;top:213px;width:234px;height:24px;"></div><svg style="left:494.20px;top:222.80px" width="10.4" height="6.4" viewBox="-1 -1 10.4 6.4"><path d="M0 0L4.2 4.4L8.4 0" fill="none" stroke="#555" stroke-width="1.25"/></svg><div style="position:absolute;top:218px;font-size:11px;line-height:12px;height:12px;color:#000;white-space:pre;letter-spacing:-0.284px;left:278.1px;">Summer Conti (Su)</div>
<div class="btn" style="left:626px;top:212px;width:132px;height:24px;"></div><div style="position:absolute;top:219px;font-size:11px;line-height:12px;height:12px;color:#000;white-space:pre;letter-spacing:-0.059px;left:629.0px;">More teachers</div>
<svg style="left:187px;top:269.4px" width="38.00" height="43.20" viewBox="0 0 38 43.2">
<rect x="0.4" y="0.4" width="37.2" height="42.4" rx="1.2" fill="#8ab4ec" stroke="#6f9bdb" stroke-width="0.8"/>
<path d="M1.4 0.4H6.3V42.8H1.4Q0.4 42.8 0.4 41.8V1.4Q0.4 0.4 1.4 0.4Z" fill="#4f7dbe"/>
<rect x="11.8" y="9.6" width="18.2" height="12" fill="#fff"/>
<path d="M14 13.8H27.8M14 17.3H27.8" stroke="#c3d0e0" stroke-width="1.3"/>
</svg>
<div style="position:absolute;top:278px;font-size:11px;line-height:12px;height:12px;color:#000;white-space:pre;letter-spacing:-0.032px;left:273.6px;">Subject</div>
<div class="cmb" style="left:274px;top:293px;width:234px;height:21px;"></div><svg style="left:494.20px;top:301.10px" width="10.4" height="6.4" viewBox="-1 -1 10.4 6.4"><path d="M0 0L4.2 4.4L8.4 0" fill="none" stroke="#555" stroke-width="1.25"/></svg><div style="position:absolute;top:297px;font-size:11px;line-height:12px;height:12px;color:#000;white-space:pre;letter-spacing:-0.664px;left:278.1px;">Games</div>
<svg style="left:181px;top:355px" width="50.00" height="50.00" viewBox="181 355 50 50">
<path d="M182.6 392.3C183 385 188 381.8 194.5 381.8C201 381.8 206 385 206.4 392.3Z" fill="#f6a3a3" stroke="#c41a1a" stroke-width="1"/>
<path d="M190.5 376H199.5V382.5C198 385.5 192 385.5 190.5 382.5Z" fill="#e8b868" stroke="#b98c4a" stroke-width="0.7"/>
<path d="M186.6 380.3C189.5 377 187 370 188 364.5C189 358 194 356 198 356.2C203.5 356.5 208.5 360 208 367C207.6 372 205 378 201 379.8C196 381.5 190 381.5 186.6 380.3Z" fill="#a87450" stroke="#93603c" stroke-width="0.7"/>
<path d="M191.5 366.5C194 364.5 200 364.5 203.5 367V374C203 379 199 381.5 197 381.5C194.5 381.5 191.5 378 191.5 374Z" fill="#efc078"/>
<path d="M192.6 403.2C193.2 394.5 199.5 390.3 210.8 390.3C222 390.3 228.5 394.5 229.2 403.2Z" fill="#b9dfba" stroke="#0c8a12" stroke-width="1"/>
<path d="M205.8 385H216V391.5C214.5 395.2 207.5 395.2 205.8 391.5Z" fill="#f3cb84" stroke="#c69a58" stroke-width="0.8"/>
<path d="M200.6 377C199.2 370 200.5 362.8 206.5 360.6C212 358.8 219 360.5 221.3 366C222.8 370 222 375 221 378.5L217.5 381H204.5Z" fill="#f3cb84" stroke="#c69a58" stroke-width="0.8"/>
<path d="M203.8 373C203.8 369 207 367.6 210.8 369.2C214.5 367 218.4 368.5 218.4 373V378.5C218.4 383.5 214 388.7 211 388.7C208 388.7 203.8 383.5 203.8 378.5Z" fill="#fddc9c" stroke="#c69a58" stroke-width="0.8"/>
</svg>
<div style="position:absolute;top:356px;font-size:11px;line-height:12px;height:12px;color:#000;white-space:pre;letter-spacing:-0.627px;left:273.6px;">Class</div>
<div class="cmb" style="left:274px;top:371px;width:152px;height:21px;"></div><svg style="left:412.20px;top:379.10px" width="10.4" height="6.4" viewBox="-1 -1 10.4 6.4"><path d="M0 0L4.2 4.4L8.4 0" fill="none" stroke="#555" stroke-width="1.25"/></svg><div style="position:absolute;top:375px;font-size:11px;line-height:12px;height:12px;color:#000;white-space:pre;letter-spacing:0.119px;left:279.0px;">5.A</div>
<div class="cmb" style="left:467px;top:371px;width:102px;height:21px;"></div><svg style="left:555.20px;top:379.10px" width="10.4" height="6.4" viewBox="-1 -1 10.4 6.4"><path d="M0 0L4.2 4.4L8.4 0" fill="none" stroke="#555" stroke-width="1.25"/></svg>
<div style="position:absolute;left:470px;top:374px;width:79px;height:15px;background:#cfdffa"></div>
<div style="position:absolute;top:375px;font-size:11px;line-height:12px;height:12px;color:#000;white-space:pre;letter-spacing:-0.2px;left:471.1px;">Entire class</div>
<div class="btn" style="left:626px;top:371px;width:132px;height:24px;border-color:#3c96e8;background:#f4f5f6"></div><div style="position:absolute;top:378px;font-size:11px;line-height:12px;height:12px;color:#000;white-space:pre;letter-spacing:-0.248px;left:629.6px;">Joint classes</div>
<div class="btn" style="left:626px;top:400px;width:132px;height:24px;"></div><div style="position:absolute;top:407px;font-size:11px;line-height:12px;height:12px;color:#000;white-space:pre;letter-spacing:-0.22px;left:629.6px;">Add division</div>
<svg style="left:183px;top:455px" width="46" height="46" viewBox="183 455 46 46">
<rect x="184.8" y="457" width="42.6" height="42.2" rx="1.5" fill="#fff" stroke="#a9b7c7" stroke-width="1.3"/>
<rect x="185.4" y="495" width="41.4" height="3.8" fill="#dce9f5"/>
<path d="M185.2 456.5H227Q227.6 456.5 227.6 457.1V463.4H184.6V457.1Q184.6 456.5 185.2 456.5Z" fill="#f58d8d" stroke="#e06565" stroke-width="0.9"/>
<g fill="#b7c9db"><rect x="197.65" y="470.80" width="2.2" height="2.2"/><rect x="202.40" y="470.80" width="2.2" height="2.2"/><rect x="207.30" y="470.80" width="2.2" height="2.2"/><rect x="212.00" y="470.80" width="2.2" height="2.2"/><rect x="216.80" y="470.80" width="2.2" height="2.2"/><rect x="192.65" y="475.80" width="2.2" height="2.2"/><rect x="197.65" y="475.80" width="2.2" height="2.2"/><rect x="202.40" y="475.80" width="2.2" height="2.2"/><rect x="207.30" y="475.80" width="2.2" height="2.2"/><rect x="212.00" y="475.80" width="2.2" height="2.2"/><rect x="216.80" y="475.80" width="2.2" height="2.2"/><rect x="192.65" y="480.50" width="2.2" height="2.2"/><rect x="197.65" y="480.50" width="2.2" height="2.2"/><rect x="202.40" y="480.50" width="2.2" height="2.2"/><rect x="207.30" y="480.50" width="2.2" height="2.2"/><rect x="212.00" y="480.50" width="2.2" height="2.2"/><rect x="216.80" y="480.50" width="2.2" height="2.2"/><rect x="192.65" y="485.20" width="2.2" height="2.2"/><rect x="197.65" y="485.20" width="2.2" height="2.2"/><rect x="202.40" y="485.20" width="2.2" height="2.2"/><rect x="207.30" y="485.20" width="2.2" height="2.2"/><rect x="212.00" y="485.20" width="2.2" height="2.2"/></g></svg>
<div style="position:absolute;top:457px;font-size:11px;line-height:12px;height:12px;color:#000;white-space:pre;letter-spacing:-0.192px;left:273.6px;">Lessons/week</div>
<div class="cmb" style="left:274px;top:473px;width:152px;height:24px;"></div><svg style="left:412.20px;top:482.80px" width="10.4" height="6.4" viewBox="-1 -1 10.4 6.4"><path d="M0 0L4.2 4.4L8.4 0" fill="none" stroke="#555" stroke-width="1.25"/></svg><div style="position:absolute;top:477px;font-size:11px;line-height:12px;height:12px;color:#000;white-space:pre;letter-spacing:-0.22px;left:280.6px;">1</div>
<div class="cmb" style="left:467px;top:472px;width:102px;height:24px;"></div><svg style="left:555.20px;top:481.80px" width="10.4" height="6.4" viewBox="-1 -1 10.4 6.4"><path d="M0 0L4.2 4.4L8.4 0" fill="none" stroke="#555" stroke-width="1.25"/></svg><div style="position:absolute;top:476px;font-size:11px;line-height:12px;height:12px;color:#000;white-space:pre;letter-spacing:-0.416px;left:471.1px;">Single</div>
<div style="position:absolute;top:476px;font-size:11px;line-height:12px;height:12px;color:#000;white-space:pre;letter-spacing:-0.05px;left:636.8000000000001px;">More weeks/terms</div>
<svg style="left:188px;top:559px" width="36.00" height="50.00" viewBox="188 559 36 50">
<rect x="189.3" y="562.6" width="33.4" height="43.2" fill="#f7b88e" stroke="#e09c70" stroke-width="0.7"/>
<rect x="205.5" y="565.3" width="6.6" height="40.2" fill="#54454a"/>
<rect x="212.1" y="565.3" width="8" height="40.2" fill="#7b6468"/>
<path d="M191.6 562.9L205.8 560.2V607.6L191.6 604.9Z" fill="#ffc49c" stroke="#e09c70" stroke-width="0.8" stroke-linejoin="round"/>
<circle cx="201.8" cy="584" r="0.8" fill="#c98a60"/>
</svg>
<div class="abs" style="left:274px;top:558px;width:13px;height:13px;border:1px solid #333;background:#fff"></div><svg style="left:274px;top:558px" width="13" height="13" viewBox="0 0 13 13"><path d="M2.6 6.4L5.3 9.2L10.6 3.3" fill="none" stroke="#4a4a4a" stroke-width="1.25"/></svg>
<div style="position:absolute;top:559px;font-size:11px;line-height:12px;height:12px;color:#000;white-space:pre;letter-spacing:-0.288px;left:289.6px;">Home classroom 5.A</div>
<div class="abs" style="left:274px;top:577px;width:13px;height:13px;border:1px solid #333;background:#fff"></div>
<div style="position:absolute;top:578px;font-size:11px;line-height:12px;height:12px;color:#000;white-space:pre;letter-spacing:-0.165px;left:289.6px;">Shared room S106, S107, S108, S109, S110</div>
<div class="abs" style="left:509px;top:556px;width:13px;height:13px;border:1px solid #333;background:#fff"></div>
<div style="position:absolute;top:557px;font-size:11px;line-height:12px;height:12px;color:#000;white-space:pre;letter-spacing:-0.206px;left:524.2px;">Teacher's classrooms</div>
<div class="abs" style="left:509px;top:576px;width:13px;height:13px;border:1px solid #333;background:#fff"></div>
<div style="position:absolute;top:577px;font-size:11px;line-height:12px;height:12px;color:#000;white-space:pre;letter-spacing:-0.235px;left:524.2px;">Subject's classrooms</div>
<div class="btn" style="left:274px;top:597px;width:342px;height:24px;"></div><div style="position:absolute;top:604px;font-size:11px;line-height:12px;height:12px;color:#000;white-space:pre;letter-spacing:-0.151px;left:277.1px;">Other available classrooms</div>
<div class="btn" style="left:626px;top:597px;width:132px;height:24px;"></div><div style="position:absolute;top:604px;font-size:11px;line-height:12px;height:12px;color:#000;white-space:pre;letter-spacing:-0.278px;left:628.9px;">More classrooms</div>
<div class="btn" style="left:169px;top:651px;width:113px;height:24px;"></div><div style="position:absolute;top:658px;font-size:11px;line-height:12px;height:12px;color:#000;white-space:pre;letter-spacing:-0.288px;left:172.1px;">Cancel</div>
<div class="btn" style="left:295px;top:651px;width:114px;height:24px;"></div><div style="position:absolute;top:658px;font-size:11px;line-height:12px;height:12px;color:#000;white-space:pre;letter-spacing:-0.041px;left:297.40000000000003px;">Help</div>
<div class="btn" style="left:590px;top:647px;width:180px;height:27px;border:2px solid #0078d7;background:#e1e1e1"></div><div style="position:absolute;top:655px;font-size:11px;line-height:12px;height:12px;color:#000;white-space:pre;letter-spacing:-0.343px;left:671.85px;">OK</div>
<div style="position:absolute;left:803px;top:281px;width:421px;height:401px;background:#f0f0f0;border:1px solid #1883d7;box-shadow:7px 4px 14px 0 rgba(0,0,0,.36)"></div>
<div style="position:absolute;left:804px;top:282px;width:419px;height:25px;background:#fff"></div>
<div style="position:absolute;top:287px;font-size:12px;line-height:14px;height:14px;color:#000;white-space:pre;letter-spacing:-0.337px;left:806.6px;">Joint classes</div>
<svg style="left:1202px;top:288px" width="12" height="12" viewBox="-6 -6 12 12"><path d="M-5 -5L5 5M5 -5L-5 5" stroke="#000" stroke-width="1.15"/></svg>
<div style="position:absolute;top:347px;font-size:11px;line-height:12px;height:12px;color:#000;white-space:pre;letter-spacing:-0.502px;left:821.4px;">Class</div>
<div class="dcmb" style="left:884px;top:343px;width:132px;height:21px;"></div><svg style="left:1002.20px;top:351.10px" width="10.4" height="6.4" viewBox="-1 -1 10.4 6.4"><path d="M0 0L4.2 4.4L8.4 0" fill="none" stroke="#444" stroke-width="1.25"/></svg><div style="position:absolute;top:348px;font-size:11px;line-height:12px;height:12px;color:#000;white-space:pre;letter-spacing:0.194px;left:887.6px;">5.A</div>
<div class="dcmb" style="left:1091px;top:343px;width:101px;height:21px;"></div><svg style="left:1178.20px;top:351.10px" width="10.4" height="6.4" viewBox="-1 -1 10.4 6.4"><path d="M0 0L4.2 4.4L8.4 0" fill="none" stroke="#444" stroke-width="1.25"/></svg><div style="position:absolute;top:348px;font-size:11px;line-height:12px;height:12px;color:#000;white-space:pre;letter-spacing:-0.21px;left:1094.35px;">Entire class</div>
<div style="position:absolute;top:376px;font-size:11px;line-height:12px;height:12px;color:#000;white-space:pre;letter-spacing:-0.502px;left:821.4px;">Class</div>
<div class="dcmb" style="left:884px;top:372px;width:132px;height:21px;border-color:#0078d7;background:#e5f1fb"></div><svg style="left:1002.20px;top:380.10px" width="10.4" height="6.4" viewBox="-1 -1 10.4 6.4"><path d="M0 0L4.2 4.4L8.4 0" fill="none" stroke="#444" stroke-width="1.25"/></svg><div style="position:absolute;top:377px;font-size:11px;line-height:12px;height:12px;color:#000;white-space:pre;letter-spacing:-0.056px;left:887.6px;">5.B</div>
<div class="dcmb" style="left:1091px;top:372px;width:101px;height:21px;"></div><svg style="left:1178.20px;top:380.10px" width="10.4" height="6.4" viewBox="-1 -1 10.4 6.4"><path d="M0 0L4.2 4.4L8.4 0" fill="none" stroke="#444" stroke-width="1.25"/></svg><div style="position:absolute;top:377px;font-size:11px;line-height:12px;height:12px;color:#000;white-space:pre;letter-spacing:-0.21px;left:1094.35px;">Entire class</div>
<div style="position:absolute;top:407px;font-size:11px;line-height:12px;height:12px;color:#000;white-space:pre;letter-spacing:-0.502px;left:821.4px;">Class</div>
<div class="dcmb" style="left:884px;top:401px;width:132px;height:21px;"></div><svg style="left:1002.20px;top:409.10px" width="10.4" height="6.4" viewBox="-1 -1 10.4 6.4"><path d="M0 0L4.2 4.4L8.4 0" fill="none" stroke="#444" stroke-width="1.25"/></svg>
<div class="xcmb" style="left:1091px;top:401px;width:101px;height:21px;"></div><svg style="left:1178.20px;top:409.10px" width="10.4" height="6.4" viewBox="-1 -1 10.4 6.4"><path d="M0 0L4.2 4.4L8.4 0" fill="none" stroke="#b4b4b4" stroke-width="1.25"/></svg>
<div style="position:absolute;top:435px;font-size:11px;line-height:12px;height:12px;color:#000;white-space:pre;letter-spacing:-0.502px;left:821.4px;">Class</div>
<div class="dcmb" style="left:884px;top:431px;width:132px;height:21px;"></div><svg style="left:1002.20px;top:439.10px" width="10.4" height="6.4" viewBox="-1 -1 10.4 6.4"><path d="M0 0L4.2 4.4L8.4 0" fill="none" stroke="#444" stroke-width="1.25"/></svg>
<div class="xcmb" style="left:1091px;top:431px;width:101px;height:21px;"></div><svg style="left:1178.20px;top:439.10px" width="10.4" height="6.4" viewBox="-1 -1 10.4 6.4"><path d="M0 0L4.2 4.4L8.4 0" fill="none" stroke="#b4b4b4" stroke-width="1.25"/></svg>
<div style="position:absolute;top:462px;font-size:11px;line-height:12px;height:12px;color:#000;white-space:pre;letter-spacing:-0.502px;left:821.4px;">Class</div>
<div class="dcmb" style="left:884px;top:458px;width:132px;height:21px;"></div><svg style="left:1002.20px;top:466.10px" width="10.4" height="6.4" viewBox="-1 -1 10.4 6.4"><path d="M0 0L4.2 4.4L8.4 0" fill="none" stroke="#444" stroke-width="1.25"/></svg>
<div class="xcmb" style="left:1091px;top:458px;width:101px;height:21px;"></div><svg style="left:1178.20px;top:466.10px" width="10.4" height="6.4" viewBox="-1 -1 10.4 6.4"><path d="M0 0L4.2 4.4L8.4 0" fill="none" stroke="#b4b4b4" stroke-width="1.25"/></svg>
<div style="position:absolute;top:492px;font-size:11px;line-height:12px;height:12px;color:#000;white-space:pre;letter-spacing:-0.502px;left:821.4px;">Class</div>
<div class="dcmb" style="left:884px;top:487px;width:132px;height:21px;"></div><svg style="left:1002.20px;top:495.10px" width="10.4" height="6.4" viewBox="-1 -1 10.4 6.4"><path d="M0 0L4.2 4.4L8.4 0" fill="none" stroke="#444" stroke-width="1.25"/></svg>
<div class="xcmb" style="left:1091px;top:487px;width:101px;height:21px;"></div><svg style="left:1178.20px;top:495.10px" width="10.4" height="6.4" viewBox="-1 -1 10.4 6.4"><path d="M0 0L4.2 4.4L8.4 0" fill="none" stroke="#b4b4b4" stroke-width="1.25"/></svg>
<div style="position:absolute;top:523px;font-size:11px;line-height:12px;height:12px;color:#000;white-space:pre;letter-spacing:-0.502px;left:821.4px;">Class</div>
<div class="dcmb" style="left:884px;top:517px;width:132px;height:21px;"></div><svg style="left:1002.20px;top:525.10px" width="10.4" height="6.4" viewBox="-1 -1 10.4 6.4"><path d="M0 0L4.2 4.4L8.4 0" fill="none" stroke="#444" stroke-width="1.25"/></svg>
<div class="xcmb" style="left:1091px;top:517px;width:101px;height:21px;"></div><svg style="left:1178.20px;top:525.10px" width="10.4" height="6.4" viewBox="-1 -1 10.4 6.4"><path d="M0 0L4.2 4.4L8.4 0" fill="none" stroke="#b4b4b4" stroke-width="1.25"/></svg>
<div style="position:absolute;top:550px;font-size:11px;line-height:12px;height:12px;color:#000;white-space:pre;letter-spacing:-0.502px;left:821.4px;">Class</div>
<div class="dcmb" style="left:884px;top:546px;width:132px;height:21px;"></div><svg style="left:1002.20px;top:554.10px" width="10.4" height="6.4" viewBox="-1 -1 10.4 6.4"><path d="M0 0L4.2 4.4L8.4 0" fill="none" stroke="#444" stroke-width="1.25"/></svg>
<div class="xcmb" style="left:1091px;top:546px;width:101px;height:21px;"></div><svg style="left:1178.20px;top:554.10px" width="10.4" height="6.4" viewBox="-1 -1 10.4 6.4"><path d="M0 0L4.2 4.4L8.4 0" fill="none" stroke="#b4b4b4" stroke-width="1.25"/></svg>
<div class="gb" style="left:822px;top:594px;width:389px;height:35px"></div>
<div class="btn" style="left:852px;top:601px;width:99px;height:19px;background:#e1e1e1"></div><div style="position:absolute;top:605px;font-size:11px;line-height:12px;height:12px;color:#000;white-space:pre;letter-spacing:0.271px;left:882.8000000000001px;">More &gt;</div>
<div class="btn" style="left:1050px;top:648px;width:73px;height:21px;border:2px solid #0078d7;background:#e1e1e1"></div><div style="position:absolute;top:653px;font-size:11px;line-height:12px;height:12px;color:#000;white-space:pre;letter-spacing:-0.893px;left:1078.1999999999998px;">OK</div>
<div class="btn" style="left:1137px;top:648px;width:73px;height:21px;background:#e1e1e1"></div><div style="position:absolute;top:653px;font-size:11px;line-height:12px;height:12px;color:#000;white-space:pre;letter-spacing:-0.238px;left:1155.85px;">Cancel</div>
<svg style="left:0;top:0" width="1248" height="732" viewBox="0 0 1248 732">
<g fill="none" stroke="#bb1e25" stroke-linecap="round" stroke-linejoin="round">
<!-- rect around Joint classes button -->
<path d="M761.4 366.6L761.2 398.6L621.2 398.9L620.9 366.8" stroke-width="3.7"/>
<path d="M619.1 366.6Q619.1 364.8 621 364.8L660 365L700 365.5L752 366.5L752 367.3L700 368L660 368.3L621 368.5Q619.1 368.5 619.1 366.6Z" fill="#bb1e25" stroke="none"/>
<!-- curved arrow -->
<path d="M753.4 365.4C757.5 347 767 332.5 784 322.5C799 315.5 815 315 833 315.8" stroke-width="4.2"/>
<path d="M805.4 308.6C815 311.8 824 314.2 833.6 315.8C824 318.4 815 321.4 806.8 325" stroke-width="4.5"/>
<!-- rect in Joint classes dialog -->
<path d="M877.8 334L877.7 399" stroke-width="4.8"/><path d="M877.7 399L1200 398.8" stroke-width="4.3"/><path d="M1200 398.8L1200.1 334.2" stroke-width="3.9"/>
</g>
<path d="M880 334.1L1040 332.6L1200 331.5L1202.3 332.6L1202 335.6L1040 335.2L880 334.9Z" fill="#bb1e25"/>
</svg>
</body></html>
